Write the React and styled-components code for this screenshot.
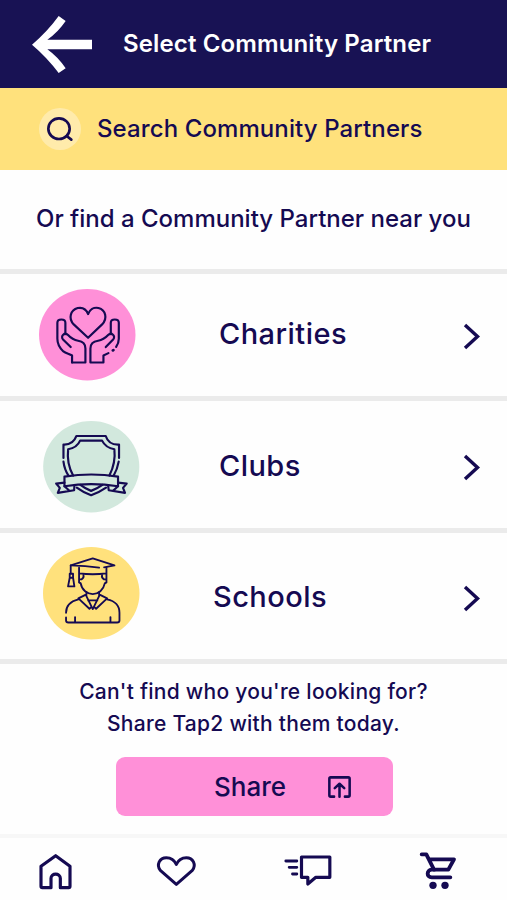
import styled, { createGlobalStyle } from "styled-components";

const GlobalStyle = createGlobalStyle`
  :root {
    --color-navy: #181254;
    --color-ink: #150a52;
    --color-yellow: #ffe17c;
    --color-pink: #ff90d8;
    --color-mint: #d2e8dd;
    --color-line: #ebebeb;
  }

  * {
    box-sizing: border-box;
  }

  body {
    margin: 0;
    background: #fefefe;
    color: var(--color-ink);
    font-family: Inter, "Open Sans", sans-serif;
    font-weight: 500;
  }

  button {
    padding: 0;
    border: none;
    background: none;
    color: inherit;
    font: inherit;
    text-align: left;
  }

  svg {
    display: block;
    flex-shrink: 0;
    overflow: visible;
  }
`;

const Screen = styled.div`
  display: flex;
  flex-direction: column;
  width: 507px;
  height: 900px;
  overflow: hidden;
`;

const Header = styled.header`
  display: flex;
  align-items: center;
  height: 88px;
  padding-left: 32px;
  background: var(--color-navy);
  color: #fff;
`;

const Title = styled.h1`
  margin: 0 0 0 31px;
  font-size: 24px;
  font-weight: 600;
  line-height: 28px;
  letter-spacing: 0.13px;
  white-space: nowrap;
`;

const SearchBar = styled.label`
  display: flex;
  align-items: center;
  height: 82px;
  padding-left: 39px;
  background: var(--color-yellow);
`;

const SearchBadge = styled.span`
  display: grid;
  place-items: center;
  width: 42px;
  height: 42px;
  border-radius: 50%;
  background: #ffebab;
`;

const SearchText = styled.span`
  margin-left: 16px;
  font-size: 24px;
  line-height: 28px;
  letter-spacing: 0.1px;
  white-space: nowrap;
`;

const Intro = styled.p`
  height: 99px;
  margin: 0;
  padding-left: 36px;
  font-size: 24px;
  line-height: 98px;
  white-space: nowrap;
`;

const Row = styled.button`
  display: grid;
  grid-template-columns: 97px 1fr 18px;
  align-items: start;
  width: 100%;
  height: ${(props) => props.$height}px;
  padding: ${(props) => props.$top}px 26px 0 ${(props) => props.$left}px;
  border-top: 5px solid var(--color-line);
`;

const Label = styled.span`
  padding: ${(props) => props.$top}px 0 0 ${(props) => props.$left}px;
  font-size: 29px;
  line-height: 34px;
  letter-spacing: 0.45px;
`;

const ChevronBox = styled.span`
  padding-top: ${(props) => props.$top}px;
`;

const Prompt = styled.div`
  display: flex;
  flex-direction: column;
  align-items: center;
  height: 175px;
  padding-top: 12px;
  border-top: 5px solid var(--color-line);
`;

const PromptLine = styled.span`
  font-size: 21px;
  line-height: 32px;
  letter-spacing: 0.27px;
  white-space: nowrap;
`;

const ShareButton = styled.button`
  display: flex;
  align-items: center;
  width: 277px;
  height: 59px;
  margin: 17px 0 0 2px;
  padding-left: 98px;
  border-radius: 9px;
  background: var(--color-pink);
  font-size: 26px;
`;

const ShareText = styled.span`
  width: 114px;
`;

const Nav = styled.nav`
  display: flex;
  align-items: flex-start;
  height: 66px;
  border-top: 4px solid #f7f7f7;
`;

const NavItem = styled.button`
  margin: ${(props) => props.$top}px 0 0 ${(props) => props.$left}px;
`;

const Line = styled.g.attrs({
  fill: "none",
  stroke: "currentColor",
  strokeLinecap: "round",
  strokeLinejoin: "round",
})``;

function BackArrow() {
  return (
    <svg width="60" height="57" viewBox="95 49 180 171" fill="currentColor">
      <path d="M175 49L196 64Q173 98 141 120H275V149H141Q173 172 196 206L175 220Q141 174 95 135Q141 96 175 49Z" />
    </svg>
  );
}

function SearchIcon() {
  return (
    <svg width="26" height="24" viewBox="141 349 78 72">
      <Line strokeWidth="8">
        <ellipse cx="177" cy="384" rx="32" ry="31" />
        <path d="M200 406L214 417" />
      </Line>
    </svg>
  );
}

function CharitiesArt() {
  return (
    <svg width="96.5" height="91.5" viewBox="26 27 289 274">
      <ellipse cx="170.5" cy="164" rx="144.5" ry="137" fill="var(--color-pink)" />
      <Line strokeWidth="6.5">
        <path d="M173 173L130 133C113 115 120 90 142 84C157 81 168 89 173 102C178 89 190 81 204 84C226 90 232 115 215 133Z" />
        <path d="M125 247V226C118 221 107 220 99 214C85 201 81 191 81 176V128C81 115 105 115 105 128V162" />
        <path d="M121 201L98 178C89 168 103 155 113 165C124 177 130 180 143 182C158 184 165 193 165 205V247H125" />
        <path d="M241 162V128C241 115 265 115 265 128V176C265 185 262 193 257 200" />
        <path d="M226 201L248 178C257 168 243 155 233 165C222 177 216 180 203 182C188 184 180 193 180 205V247H219V226L234 219" />
        <path d="M247 211L249 210" strokeWidth="8" />
      </Line>
    </svg>
  );
}

function ClubsArt() {
  return (
    <svg width="96.5" height="91.5" viewBox="38 26 289 275">
      <ellipse cx="182.5" cy="163.5" rx="144.5" ry="137.5" fill="var(--color-mint)" />
      <Line strokeWidth="6.5">
        <path d="M99 137V97C117 98 131 90 138 71H226C232 90 247 98 266 97V137" />
        <path d="M99 148C101 164 106 178 114 190M265 148C262 164 257 178 250 190" />
        <path d="M128 190C114 164 110 137 113 111C130 108 143 99 149 85H215C222 99 235 108 252 111C255 137 250 164 237 190" />
        <path d="M102 193C154 185 211 185 263 193V222C211 214 154 214 102 222Z" />
        <path d="M102 211L77 214L88 227L82 242L131 234L132 219M102 222L116 235" />
        <path d="M263 211L289 214L278 227L284 242L235 234L233 219M263 222L249 235" />
        <path d="M139 226Q158 240 182 249Q207 240 227 226M150 218Q164 229 182 236Q201 229 216 218" />
      </Line>
    </svg>
  );
}

function SchoolsArt() {
  return (
    <svg width="96.5" height="92.5" viewBox="38 22 289 277">
      <ellipse cx="182.5" cy="160.5" rx="144.5" ry="138.5" fill="var(--color-yellow)" />
      <Line strokeWidth="5.5">
        <path d="M206 84Q165 78 121 77L187 56L252 77L221 83" />
        <path d="M121 77V102M118 102H128V114H118ZM118 114L113 140H132L128 114" />
        <path d="M146 84V101Q187 106 228 101V84M146 101V128L151 131C154 151 171 163 187 163C204 163 219 151 223 131L228 128V101" />
        <path d="M149 119H153Q162 113 159 106M225 119H221Q212 113 215 106" />
        <path d="M168 157V169L187 208L206 169V157M168 164L144 176L177 207L183 201M206 164L230 176L197 207L191 201M173 182H201" />
        <path d="M144 179C124 184 107 193 107 219M107 233V242Q107 248 114 248H260Q267 248 267 242V219C267 193 252 184 230 179M134 232V248M240 232V248" />
      </Line>
    </svg>
  );
}

function Chevron() {
  return (
    <svg width="18" height="27" viewBox="0 0 18 27">
      <path
        d="M2 2L14.5 13.5L2 25"
        fill="none"
        stroke="currentColor"
        strokeWidth="3.4"
      />
    </svg>
  );
}

function ShareIcon() {
  return (
    <svg width="23" height="22" viewBox="686 320 68 65">
      <Line strokeWidth="7.5">
        <path d="M704 381H694Q690 381 690 377V328Q690 324 694 324H746Q750 324 750 328V377Q750 381 746 381H736M720 381V343M706 356L720 343L734 356" />
      </Line>
    </svg>
  );
}

function HomeIcon() {
  return (
    <svg width="33" height="35" viewBox="118 100 99 105">
      <Line strokeWidth="9.5">
        <path d="M124 137L168 105L211 137V197Q211 201 207 201H182V173C182 156 154 156 154 173V201H128Q124 201 124 197Z" />
      </Line>
    </svg>
  );
}

function HeartIcon() {
  return (
    <svg width="39" height="30" viewBox="472 107 117 90">
      <Line strokeWidth="9">
        <path d="M530 192L482 150C469 133 480 112 500 112C515 112 525 121 530 132C535 121 546 112 560 112C580 112 591 133 578 150Z" />
      </Line>
    </svg>
  );
}

function MessageIcon() {
  return (
    <svg width="48" height="31" viewBox="91 106 143 93">
      <Line strokeWidth="9.5">
        <path d="M143 112H228V173H186L162 193V173H143Z" />
        <path d="M96 124H129M106 143H129M116 163H129" strokeWidth="8.5" />
      </Line>
    </svg>
  );
}

function CartIcon() {
  return (
    <svg width="36" height="37" viewBox="499 97 108 111">
      <Line strokeWidth="11.5">
        <path d="M504 104H518L541 150H584L601 119H526" />
        <path d="M541 150H534C518 151 518 173 534 173H590" />
      </Line>
      <circle cx="538" cy="197" r="11" fill="currentColor" />
      <circle cx="574" cy="197" r="11" fill="currentColor" />
    </svg>
  );
}

const categories = [
  {
    name: "Charities",
    Art: CharitiesArt,
    row: { $height: 127, $top: 15, $left: 39 },
    label: { $top: 28, $left: 83 },
    chevronTop: 34,
  },
  {
    name: "Clubs",
    Art: ClubsArt,
    row: { $height: 132, $top: 20, $left: 43 },
    label: { $top: 28, $left: 79 },
    chevronTop: 33,
  },
  {
    name: "Schools",
    Art: SchoolsArt,
    row: { $height: 131, $top: 14, $left: 43 },
    label: { $top: 33, $left: 73 },
    chevronTop: 38,
  },
];

const navItems = [
  { name: "Home", Icon: HomeIcon, $top: 16, $left: 39 },
  { name: "Favourites", Icon: HeartIcon, $top: 18, $left: 85 },
  { name: "Messages", Icon: MessageIcon, $top: 17, $left: 88 },
  { name: "Cart", Icon: CartIcon, $top: 14, $left: 88 },
];

function App() {
  return (
    <>
      <GlobalStyle />
      <Screen>
        <Header>
          <button aria-label="Back">
            <BackArrow />
          </button>
          <Title>Select Community Partner</Title>
        </Header>
        <SearchBar>
          <SearchBadge>
            <SearchIcon />
          </SearchBadge>
          <SearchText>Search Community Partners</SearchText>
        </SearchBar>
        <Intro>Or find a Community Partner near you</Intro>
        {categories.map(({ name, Art, row, label, chevronTop }) => (
          <Row key={name} {...row}>
            <Art />
            <Label {...label}>{name}</Label>
            <ChevronBox $top={chevronTop}>
              <Chevron />
            </ChevronBox>
          </Row>
        ))}
        <Prompt>
          <PromptLine>Can't find who you're looking for?</PromptLine>
          <PromptLine>Share Tap2 with them today.</PromptLine>
          <ShareButton>
            <ShareText>Share</ShareText>
            <ShareIcon />
          </ShareButton>
        </Prompt>
        <Nav>
          {navItems.map(({ name, Icon, $top, $left }) => (
            <NavItem key={name} aria-label={name} $top={$top} $left={$left}>
              <Icon />
            </NavItem>
          ))}
        </Nav>
      </Screen>
    </>
  );
}

export default App;
